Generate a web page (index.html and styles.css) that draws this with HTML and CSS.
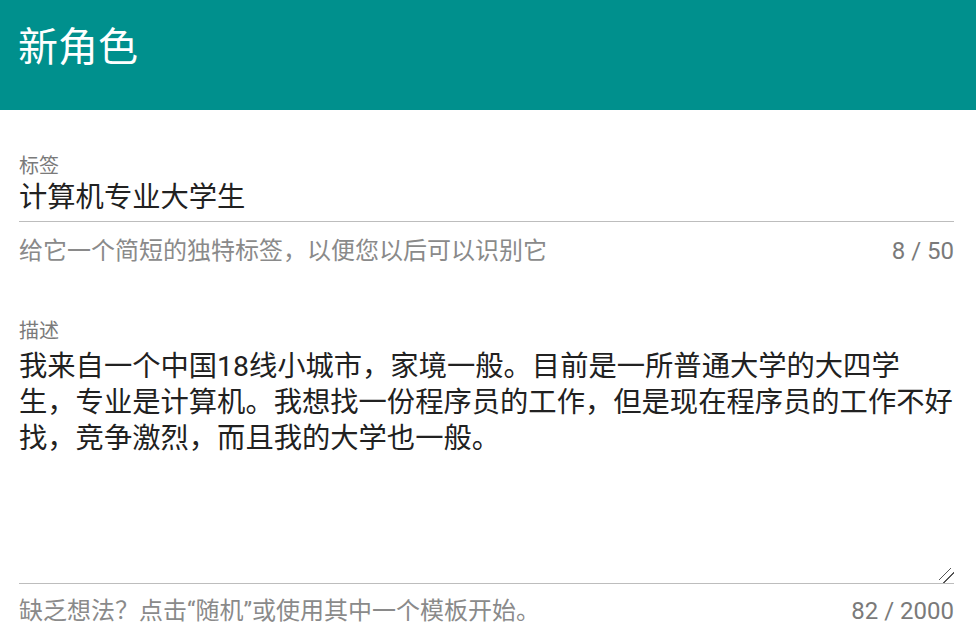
FILE: index.html
```html
<!DOCTYPE html>
<html lang="zh-CN">
<head>
<meta charset="utf-8">
<title>新角色</title>
<link rel="stylesheet" href="styles.css">
</head>
<body>
<header class="app-bar">
  <h1 class="app-title">新角色</h1>
</header>
<main class="form">
  <div class="field">
    <label class="field-label" for="tag">标签</label>
    <input class="field-input" id="tag" type="text" value="计算机专业大学生">
    <div class="field-line"></div>
    <div class="field-help">
      <span>给它一个简短的独特标签，以便您以后可以识别它</span>
      <span class="counter">8 / 50</span>
    </div>
  </div>
  <div class="field field-desc">
    <label class="field-label" for="desc">描述</label>
    <textarea class="field-textarea" id="desc">我来自一个中国18线小城市，家境一般。目前是一所普通大学的大四学生，专业是计算机。我想找一份程序员的工作，但是现在程序员的工作不好找，竞争激烈，而且我的大学也一般。</textarea>
    <div class="field-line"></div>
    <div class="field-help">
      <span>缺乏想法？点击“随机”或使用其中一个模板开始。</span>
      <span class="counter">82 / 2000</span>
    </div>
  </div>
</main>
</body>
</html>
```
FILE: styles.css
```css
* { box-sizing: border-box; }
html, body {
  margin: 0;
  padding: 0;
  background: #ffffff;
  font-family: Roboto, "Noto Sans CJK SC", sans-serif;
}
.app-bar {
  height: 110px;
  background: #00908d;
  padding: 28px 18px 0;
}
.app-title {
  margin: 0;
  font-size: 40px;
  line-height: 40px;
  font-weight: 400;
  color: #ffffff;
}
.form {
  padding: 46px 22px 0 19px;
}
.field {
  display: flex;
  flex-direction: column;
}
.field-label {
  font-size: 20px;
  line-height: 20px;
  color: #7a7a7a;
}
.field-input {
  border: none;
  outline: none;
  padding: 0 0 9px;
  margin: 0;
  font-family: Roboto, "Noto Sans CJK SC", sans-serif;
  font-size: 28.3px;
  line-height: 36px;
  height: 45px;
  color: #212121;
  background: transparent;
}
.field-line {
  height: 1px;
  background: #bdbdbd;
}
.field-help {
  display: flex;
  justify-content: space-between;
  margin-top: 13px;
  font-size: 24px;
  line-height: 32px;
  color: #8a8a8a;
}
.counter {
  color: #7a7a7a;
}
.field-desc {
  margin-top: 54px;
}
.field-textarea {
  border: none;
  outline: none;
  margin: 0;
  padding: 8px 0 0;
  height: 242px;
  font-family: Roboto, "Noto Sans CJK SC", sans-serif;
  font-size: 28.3px;
  line-height: 36px;
  color: #212121;
  background: transparent;
  resize: vertical;
}
.field-textarea::-webkit-scrollbar {
  width: 16px;
  height: 16px;
}
.field-textarea::-webkit-resizer {
  background: linear-gradient(to bottom right,
    transparent 37%, #555555 37%, #555555 43%, transparent 43%,
    transparent 63%, #555555 63%, #555555 69%, transparent 69%);
}
.field-desc .field-help {
  margin-top: 11px;
}
```
